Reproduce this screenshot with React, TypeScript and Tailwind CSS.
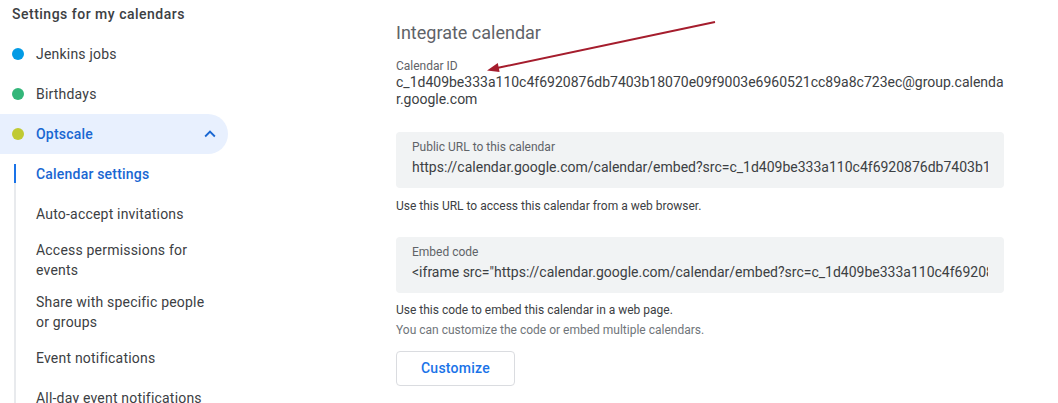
import { ReactNode } from "react";

const calendars = [
  { name: "Jenkins jobs", color: "bg-[#039be5]" },
  { name: "Birthdays", color: "bg-[#33b679]" },
];

function SubItem({ children, active }: { children: ReactNode; active?: boolean }) {
  return (
    <div
      className={`flex min-h-10 items-center py-[10px] leading-5 text-[14px] tracking-[0.2px] ${
        active ? "font-medium text-[#1967d2]" : "text-[#3c4043]"
      }`}
    >
      <span>{children}</span>
    </div>
  );
}

function CodeBox({ label, value }: { label: string; value: string }) {
  return (
    <div className="h-[56px] rounded-[4px] bg-[#f1f3f4] px-4 pt-[7px]">
      <div className="text-[12px] leading-4 text-[#5f6368]">{label}</div>
      <div className="mt-[2px] overflow-hidden whitespace-nowrap text-[14px] leading-5 text-[#3c4043]">
        {value}
      </div>
    </div>
  );
}

export default function App() {
  return (
    <div className="relative flex h-[403px] w-[1058px] overflow-hidden bg-white font-['Roboto','Liberation_Sans',sans-serif]">
      {/* sidebar */}
      <div className="w-[228px] shrink-0">
        <div className="h-[34px] pl-3 pt-1 text-[14px] font-medium leading-5 tracking-[0.5px] text-[#3c4043]">
          Settings for my calendars
        </div>

        {calendars.map((c) => (
          <div key={c.name} className="flex h-10 items-center pl-3 text-[14px] tracking-[0.2px] text-[#3c4043]">
            <span className={`h-3 w-3 rounded-full ${c.color}`} />
            <span className="ml-3">{c.name}</span>
          </div>
        ))}

        <div className="flex h-10 items-center rounded-r-full bg-[#e8f0fe] pl-3 pr-[7px] text-[14px] font-medium tracking-[0.2px] text-[#1967d2]">
          <span className="h-3 w-3 rounded-full bg-[#c0ca33]" />
          <span className="ml-3">Optscale</span>
          <svg className="ml-auto h-[22px] w-[22px]" viewBox="0 0 24 24" fill="#1967d2">
            <path d="M7.41 15.41 12 10.83l4.59 4.58L18 14l-6-6-6 6z" />
          </svg>
        </div>

        <div className="flex">
          <div className="ml-[14px] mt-[10px] flex w-[2px] flex-col">
            <div className="h-[19px] bg-[#1a73e8]" />
            <div className="flex-1 bg-[#e8eaed]" />
          </div>
          <div className="ml-[20px] w-[180px]">
            <SubItem active>Calendar settings</SubItem>
            <SubItem>Auto-accept invitations</SubItem>
            <div className="py-1.5 text-[14px] leading-5 tracking-[0.2px] text-[#3c4043]">Access permissions for events</div>
            <div className="py-1.5 text-[14px] leading-5 tracking-[0.2px] text-[#3c4043]">Share with specific people or groups</div>
            <SubItem>Event notifications</SubItem>
            <SubItem>All-day event notifications</SubItem>
          </div>
        </div>
      </div>

      {/* main */}
      <div className="ml-[168px] w-[608px] shrink-0 pt-[21px]">
        <h2 className="text-[18px] leading-6 text-[#5f6368]">Integrate calendar</h2>

        <div className="mt-[13px] text-[12px] leading-4 text-[#5f6368]">Calendar ID</div>
        <div className="break-all text-[14px] leading-[17px] text-[#3c4043]">
          c_1d409be333a110c4f6920876db7403b18070e09f9003e6960521cc89a8c723ec@group.calendar.google.com
        </div>

        <div className="mt-6">
          <CodeBox
            label="Public URL to this calendar"
            value="https://calendar.google.com/calendar/embed?src=c_1d409be333a110c4f6920876db7403b18070e09f9003e6960521cc89a8c723ec%40group.calendar.google.com&ctz=Europe%2FKiev"
          />
        </div>
        <p className="mt-2 text-[12px] leading-5 text-[#3c4043]">
          Use this URL to access this calendar from a web browser.
        </p>

        <div className="mt-[21px]">
          <CodeBox
            label="Embed code"
            value={'<iframe src="https://calendar.google.com/calendar/embed?src=c_1d409be333a110c4f6920876db7403b18070e09f9003e6960521cc89a8c723ec%40group.calendar.google.com&ctz=Europe%2FKiev" style="border: 0" width="800" height="600" frameborder="0" scrolling="no"></iframe>'}
          />
        </div>
        <p className="mt-[7px] text-[12px] leading-5 text-[#3c4043]">Use this code to embed this calendar in a web page.</p>
        <p className="text-[12px] leading-5 text-[#70757a]">You can customize the code or embed multiple calendars.</p>

        <button className="mt-[11px] h-[35px] w-[119px] rounded-[4px] border border-[#dadce0] bg-white text-[14px] font-medium tracking-[0.25px] text-[#1a73e8]">
          Customize
        </button>
      </div>

      {/* annotation arrow */}
      <svg className="pointer-events-none absolute inset-0 h-full w-full" viewBox="0 0 1058 403">
        <line x1="715" y1="22" x2="497" y2="68" stroke="#a51d2d" strokeWidth="2" />
        <polygon points="487,70.5 499.6,72 497.8,63" fill="#a51d2d" />
      </svg>
    </div>
  );
}
